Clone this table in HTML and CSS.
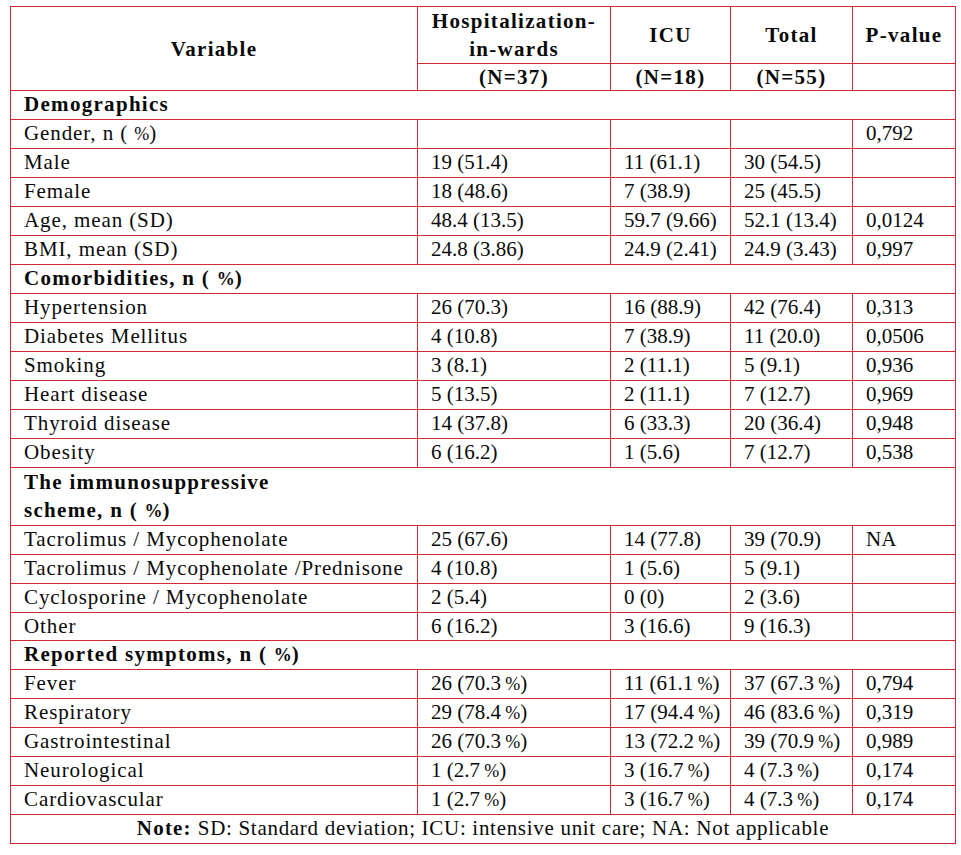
FILE: index.html
```html
<!DOCTYPE html>
<html lang="en">
<head>
<meta charset="utf-8">
<title>Patient characteristics</title>
<link rel="stylesheet" href="styles.css">
</head>
<body>
<table class="data">
  <colgroup>
    <col class="c-var">
    <col class="c-hosp">
    <col class="c-icu">
    <col class="c-total">
    <col class="c-p">
  </colgroup>
  <thead>
    <tr class="head-top">
      <th rowspan="2" class="var-head">Variable</th>
      <th>Hospitalization-<br>in-wards</th>
      <th>ICU</th>
      <th>Total</th>
      <th>P-value</th>
    </tr>
    <tr class="head-sub">
      <th>(N=37)</th>
      <th>(N=18)</th>
      <th>(N=55)</th>
      <th></th>
    </tr>
  </thead>
  <tbody>
    <tr class="section"><td colspan="5">Demographics</td></tr>
    <tr><td>Gender, n ( <span class="pc">%</span>)</td><td></td><td></td><td></td><td>0,792</td></tr>
    <tr><td>Male</td><td>19 (51.4)</td><td>11 (61.1)</td><td>30 (54.5)</td><td></td></tr>
    <tr><td>Female</td><td>18 (48.6)</td><td>7 (38.9)</td><td>25 (45.5)</td><td></td></tr>
    <tr><td>Age, mean (SD)</td><td>48.4 (13.5)</td><td>59.7 (9.66)</td><td>52.1 (13.4)</td><td>0,0124</td></tr>
    <tr><td>BMI, mean (SD)</td><td>24.8 (3.86)</td><td>24.9 (2.41)</td><td>24.9 (3.43)</td><td>0,997</td></tr>
    <tr class="section"><td colspan="5">Comorbidities, n ( <span class="pc">%</span>)</td></tr>
    <tr><td>Hypertension</td><td>26 (70.3)</td><td>16 (88.9)</td><td>42 (76.4)</td><td>0,313</td></tr>
    <tr><td>Diabetes Mellitus</td><td>4 (10.8)</td><td>7 (38.9)</td><td>11 (20.0)</td><td>0,0506</td></tr>
    <tr><td>Smoking</td><td>3 (8.1)</td><td>2 (11.1)</td><td>5 (9.1)</td><td>0,936</td></tr>
    <tr><td>Heart disease</td><td>5 (13.5)</td><td>2 (11.1)</td><td>7 (12.7)</td><td>0,969</td></tr>
    <tr><td>Thyroid disease</td><td>14 (37.8)</td><td>6 (33.3)</td><td>20 (36.4)</td><td>0,948</td></tr>
    <tr><td>Obesity</td><td>6 (16.2)</td><td>1 (5.6)</td><td>7 (12.7)</td><td>0,538</td></tr>
    <tr class="section tall"><td colspan="5">The immunosuppressive<br>scheme, n ( <span class="pc">%</span>)</td></tr>
    <tr><td>Tacrolimus / Mycophenolate</td><td>25 (67.6)</td><td>14 (77.8)</td><td>39 (70.9)</td><td>NA</td></tr>
    <tr><td>Tacrolimus / Mycophenolate /Prednisone</td><td>4 (10.8)</td><td>1 (5.6)</td><td>5 (9.1)</td><td></td></tr>
    <tr><td>Cyclosporine / Mycophenolate</td><td>2 (5.4)</td><td>0 (0)</td><td>2 (3.6)</td><td></td></tr>
    <tr><td>Other</td><td>6 (16.2)</td><td>3 (16.6)</td><td>9 (16.3)</td><td></td></tr>
    <tr class="section"><td colspan="5">Reported symptoms, n ( <span class="pc">%</span>)</td></tr>
    <tr><td>Fever</td><td>26 (70.3&#8201;<span class="pc">%</span>)</td><td>11 (61.1&#8201;<span class="pc">%</span>)</td><td>37 (67.3&#8201;<span class="pc">%</span>)</td><td>0,794</td></tr>
    <tr><td>Respiratory</td><td>29 (78.4&#8201;<span class="pc">%</span>)</td><td>17 (94.4&#8201;<span class="pc">%</span>)</td><td>46 (83.6&#8201;<span class="pc">%</span>)</td><td>0,319</td></tr>
    <tr><td>Gastrointestinal</td><td>26 (70.3&#8201;<span class="pc">%</span>)</td><td>13 (72.2&#8201;<span class="pc">%</span>)</td><td>39 (70.9&#8201;<span class="pc">%</span>)</td><td>0,989</td></tr>
    <tr><td>Neurological</td><td>1 (2.7&#8201;<span class="pc">%</span>)</td><td>3 (16.7&#8201;<span class="pc">%</span>)</td><td>4 (7.3&#8201;<span class="pc">%</span>)</td><td>0,174</td></tr>
    <tr><td>Cardiovascular</td><td>1 (2.7&#8201;<span class="pc">%</span>)</td><td>3 (16.7&#8201;<span class="pc">%</span>)</td><td>4 (7.3&#8201;<span class="pc">%</span>)</td><td>0,174</td></tr>
  </tbody>
  <tfoot>
    <tr><td colspan="5" class="note"><b>Note:</b> SD: Standard deviation; ICU: intensive unit care; NA: Not applicable</td></tr>
  </tfoot>
</table>
</body>
</html>
```

FILE: styles.css
```css
html, body {
  margin: 0;
  padding: 0;
  background: #ffffff;
}

body {
  padding: 6px 0 0 10px;
  font-family: "Liberation Serif", "Times New Roman", serif;
  font-size: 21px;
  color: #0a0a0a;
}

.data {
  border-collapse: collapse;
  table-layout: fixed;
  width: 945px;
}

.c-var { width: 407px; }
.c-hosp { width: 193px; }
.c-icu { width: 120px; }
.c-total { width: 122px; }
.c-p { width: 103px; }

.data th,
.data td {
  border: 1px solid #d02a36;
  padding: 0 0 0 13px;
  line-height: 27.97px;
  text-align: left;
  vertical-align: middle;
  white-space: nowrap;
  letter-spacing: 0;
}

.data td:first-child {
  letter-spacing: 0.9px;
}

.data th {
  text-align: center;
  padding: 0;
  font-weight: bold;
  letter-spacing: 1.3px;
}

.head-top th {
  height: 56px;
  line-height: 28px;
}

.head-sub th {
  line-height: 26px;
}

.data .section td {
  font-weight: bold;
  letter-spacing: 1.3px;
}

.tall td {
  line-height: 28.5px;
}

.pc {
  font-size: 18px;
  line-height: 1;
  letter-spacing: 0;
}

.data td.note {
  text-align: center;
  padding: 0;
  letter-spacing: 0.7px;
}

.note b {
  letter-spacing: 1.2px;
}
```
